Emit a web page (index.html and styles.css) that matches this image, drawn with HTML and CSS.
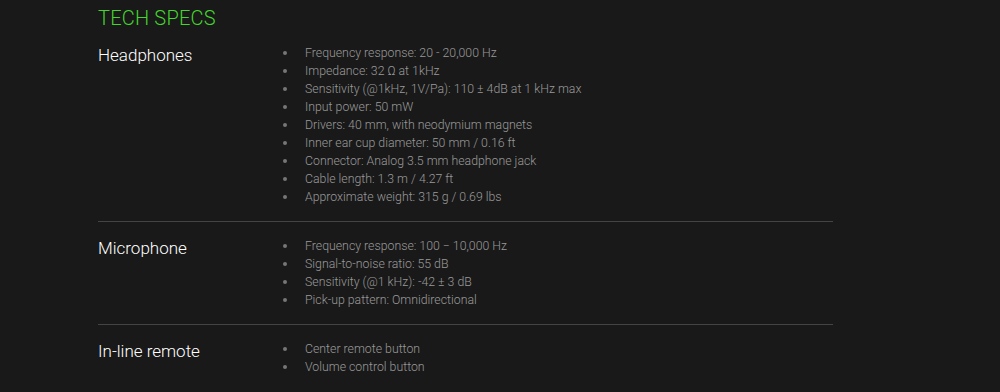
FILE: index.html
```html
<!DOCTYPE html>
<html lang="en">
<head>
    <meta charset="UTF-8">
    <title>Tech Specs</title>
    <link rel="stylesheet" href="styles.css">
</head>
<body>
    <div class="specs">
        <h1>TECH SPECS</h1>

        <div class="spec-row">
            <h2>Headphones</h2>
            <ul>
                <li>Frequency response: 20 - 20,000 Hz</li>
                <li>Impedance: 32 &Omega; at 1kHz</li>
                <li>Sensitivity (@1kHz, 1V/Pa): 110 &plusmn; 4dB at 1 kHz max</li>
                <li>Input power: 50 mW</li>
                <li>Drivers: 40 mm, with neodymium magnets</li>
                <li>Inner ear cup diameter: 50 mm / 0.16 ft</li>
                <li>Connector: Analog 3.5 mm headphone jack</li>
                <li>Cable length: 1.3 m / 4.27 ft</li>
                <li>Approximate weight: 315 g / 0.69 lbs</li>
            </ul>
        </div>

        <div class="spec-row">
            <h2>Microphone</h2>
            <ul>
                <li>Frequency response: 100 &minus; 10,000 Hz</li>
                <li>Signal-to-noise ratio: 55 dB</li>
                <li>Sensitivity (@1 kHz): -42 &plusmn; 3 dB</li>
                <li>Pick-up pattern: Omnidirectional</li>
            </ul>
        </div>

        <div class="spec-row">
            <h2>In-line remote</h2>
            <ul>
                <li>Center remote button</li>
                <li>Volume control button</li>
            </ul>
        </div>
    </div>
</body>
</html>
```

FILE: styles.css
```css
body {
    margin: 0;
    background: #191919;
    color: #9a9a9a;
    font-family: Roboto, 'Liberation Sans', sans-serif;
    height: 392px;
    overflow: hidden;
}

.specs {
    width: 735px;
    margin-left: 98px;
}

h1 {
    margin: 0;
    padding-top: 6px;
    font-weight: 300;
    font-size: 20px;
    line-height: 24px;
    color: #44d62c;
    letter-spacing: 0.2px;
}

.spec-row {
    display: grid;
    grid-template-columns: 185px 1fr;
    padding: 15px 0;
    border-bottom: 1px solid #444;
}

.spec-row:first-of-type {
    padding-top: 14px;
}

.spec-row:last-child {
    border-bottom: none;
}

h2 {
    margin: 0;
    font-weight: 300;
    font-size: 17px;
    line-height: 22px;
    color: #fff;
}

ul {
    margin: 0;
    padding: 0;
    list-style: none;
}

li {
    display: flex;
    align-items: center;
    font-size: 12.3px;
    font-weight: 300;
    line-height: 18px;
}

li::before {
    content: "";
    width: 4px;
    height: 4px;
    border-radius: 50%;
    background: #777;
    margin-right: 18px;
    flex-shrink: 0;
}
```
